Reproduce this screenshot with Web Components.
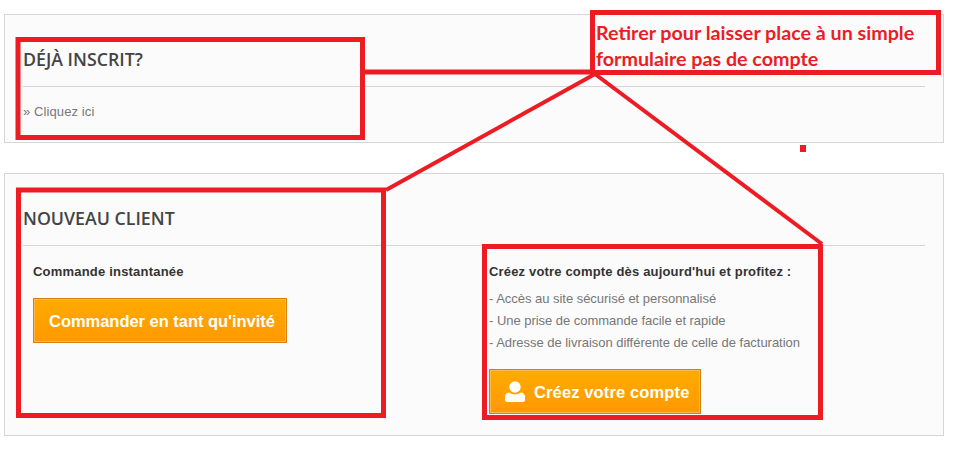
<!DOCTYPE html>
<html lang="fr">
<head>
<meta charset="utf-8">
<title>Commande</title>
<style>
html,body{margin:0;background:#fff}
body{position:relative;width:975px;height:455px;overflow:hidden;font-family:"Liberation Sans",Arial,sans-serif}
</style>
</head>
<body>
<checkout-page>
  <checkout-panel title="DÉJÀ INSCRIT?" style="--panel-h:129px">
    <link-line>» Cliquez ici</link-line>
  </checkout-panel>
  <checkout-panel title="NOUVEAU CLIENT" style="--panel-h:263px">
    <div style="display:grid;grid-template-columns:466px 1fr;height:100%">
      <guest-column>
        <span slot="title">Commande instantanée</span>
        <orange-button>Commander en tant qu'invité</orange-button>
      </guest-column>
      <signup-column>
        <span slot="title">Créez votre compte dès aujourd'hui et profitez :</span>
        <link-line>- Accès au site sécurisé et personnalisé</link-line>
        <link-line>- Une prise de commande facile et rapide</link-line>
        <link-line>- Adresse de livraison différente de celle de facturation</link-line>
        <orange-button slot="action" icon>Créez votre compte</orange-button>
      </signup-column>
    </div>
  </checkout-panel>
</checkout-page>
<review-notes>Retirer pour laisser place à un simple<br>formulaire pas de compte</review-notes>

<script>
class CheckoutPage extends HTMLElement{
    constructor(){
        super()
        this.attachShadow({mode:'open'});
        this.shadowRoot.innerHTML=`
          <style>
            :host{display:flex;flex-direction:column;gap:30px;width:940px;padding:14px 0 0 4px}
          </style>
          <slot></slot>
        `;
    }
}

class CheckoutPanel extends HTMLElement{
    constructor(){
        super()
        this.attachShadow({mode:'open'});
    }
    connectedCallback(){
        this.shadowRoot.innerHTML=`
          <style>
            :host{display:block;box-sizing:border-box;height:var(--panel-h);background:#fbfbfb;border:1px solid #d6d6d6;padding:0 18px}
            h2{box-sizing:border-box;height:72px;margin:0;padding-top:31px;border-bottom:1px solid #d6d6d6;
               font:600 17.75px/26px "Open Sans",sans-serif;color:#444}
            .body{height:calc(100% - 72px)}
          </style>
          <h2>${this.getAttribute('title')}</h2>
          <div class="body"><slot></slot></div>
        `;
    }
}

class LinkLine extends HTMLElement{
    constructor(){
        super()
        this.attachShadow({mode:'open'});
        this.shadowRoot.innerHTML=`
          <style>
            :host{display:block;font:13px/22px "Liberation Sans",sans-serif;letter-spacing:var(--line-ls,.1px);color:#777;padding-top:var(--line-top,14px)}
          </style>
          <slot></slot>
        `;
    }
}

class GuestColumn extends HTMLElement{
    constructor(){
        super()
        this.attachShadow({mode:'open'});
        this.shadowRoot.innerHTML=`
          <style>
            :host{display:block;padding:16px 0 0 10px}
            .title{font:bold 13px/20px "Liberation Sans",sans-serif;letter-spacing:.2px;color:#333;margin-bottom:16px}
          </style>
          <div class="title"><slot name="title"></slot></div>
          <slot></slot>
        `;
    }
}

class SignupColumn extends HTMLElement{
    constructor(){
        super()
        this.attachShadow({mode:'open'});
        this.shadowRoot.innerHTML=`
          <style>
            :host{display:block;padding-top:16px;--line-top:0;--line-ls:-.03px}
            .title{font:bold 13px/20px "Liberation Sans",sans-serif;letter-spacing:.17px;color:#333;margin-bottom:6px}
            .action{margin-top:15px}
          </style>
          <div class="title"><slot name="title"></slot></div>
          <slot></slot>
          <div class="action"><slot name="action"></slot></div>
        `;
    }
}

class OrangeButton extends HTMLElement{
    constructor(){
        super()
        this.attachShadow({mode:'open'});
    }
    connectedCallback(){
        const icon=this.hasAttribute('icon')?`
          <svg width="20" height="22" viewBox="0 0 20 22" fill="#fff">
            <circle cx="10" cy="6" r="5.7"/>
            <path d="M0 19V16Q0 12 4 11.5Q7 13.5 10 13.5T16 11.5Q20 12 20 16V19Q20 21 18 21H2Q0 21 0 19Z"/>
          </svg>`:'';
        this.shadowRoot.innerHTML=`
          <style>
            :host{display:inline-flex;box-sizing:border-box;height:45px;align-items:center;gap:9px;padding:0 11px 0 15px;
                  background:linear-gradient(#ffab00,#ff9900);border:1px solid #d5800f;box-shadow:inset 0 0 0 1px #ffb84d;
                  font:bold 16.5px/20px "Liberation Sans",sans-serif;letter-spacing:-.03px;color:#fff;white-space:nowrap}
            :host([icon]){letter-spacing:.13px}
          </style>
          ${icon}<slot></slot>
        `;
    }
}

// annotations drawn over the page, free canvas
class ReviewNotes extends HTMLElement{
    constructor(){
        super()
        this.attachShadow({mode:'open'});
        this.shadowRoot.innerHTML=`
          <style>
            :host{position:absolute;left:0;top:0;width:975px;height:455px;display:block}
            svg{position:absolute;left:0;top:0}
            .note{position:absolute;left:596px;top:20px;font:bold 19.7px/26px Lato,sans-serif;color:#ed1c24;white-space:nowrap}
          </style>
          <svg width="975" height="455" fill="none" stroke="#ed1c24" stroke-width="5">
            <rect x="18" y="39.5" width="344.5" height="98"/>
            <rect x="18.5" y="190" width="365" height="225.5"/>
            <rect x="484.5" y="246.5" width="336" height="171"/>
            <rect x="592.5" y="12.5" width="346" height="60"/>
            <path d="M363 72H592"/>
            <path d="M386 190L595 74" stroke-width="4"/>
            <path d="M595 74L822 244" stroke-width="4"/>
            <rect x="800" y="145" width="6" height="7" fill="#ed1c24" stroke="none"/>
          </svg>
          <div class="note"><slot></slot></div>
        `;
    }
}

customElements.define('checkout-page',CheckoutPage);
customElements.define('checkout-panel',CheckoutPanel);
customElements.define('link-line',LinkLine);
customElements.define('guest-column',GuestColumn);
customElements.define('signup-column',SignupColumn);
customElements.define('orange-button',OrangeButton);
customElements.define('review-notes',ReviewNotes);
</script>
</body>
</html>
